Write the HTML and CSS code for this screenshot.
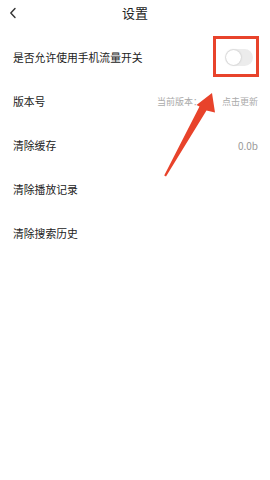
FILE: index.html
```html
<!DOCTYPE html>
<html lang="zh-CN">
<head>
<meta charset="utf-8">
<link rel="stylesheet" href="styles.css">
</head>
<body>
<div class="page">
  <header class="header">
    <svg class="back" width="8" height="12" viewBox="0 0 8 12"><path d="M6 1.5 L1.8 6 L6 10.5" fill="none" stroke="#333" stroke-width="1.4" stroke-linecap="round" stroke-linejoin="round"/></svg>
    <div class="title">设置</div>
  </header>
  <div class="row">
    <span class="label">是否允许使用手机流量开关</span>
    <span class="toggle"><span class="knob"></span></span>
  </div>
  <div class="row">
    <span class="label">版本号</span>
    <span class="version"><span class="cur">当前版本：</span><span class="upd">点击更新</span></span>
  </div>
  <div class="row">
    <span class="label">清除缓存</span>
    <span class="value">0.0b</span>
  </div>
  <div class="row">
    <span class="label">清除播放记录</span>
  </div>
  <div class="row">
    <span class="label">清除搜索历史</span>
  </div>
  <div class="mark-box"></div>
  <svg class="arrow" width="270" height="480" viewBox="0 0 270 480">
    <polygon points="212,93 215,112.5 206.5,110.5 166,176.6 164.2,175.6 199.5,106.5 196.5,105" fill="#e8432b"/>
  </svg>
</div>
</body>
</html>
```
FILE: styles.css
```css
html, body {
  margin: 0;
  padding: 0;
  background: #fff;
}
body {
  font-family: "Noto Sans CJK SC", "Noto Sans", sans-serif;
  color: #333;
}
.page {
  position: relative;
  width: 270px;
  height: 480px;
  overflow: hidden;
}
.header {
  height: 35px;
  display: flex;
  align-items: flex-start;
  justify-content: center;
  position: relative;
}
.back {
  position: absolute;
  left: 9px;
  top: 7px;
}
.title {
  height: 26px;
  line-height: 26px;
  font-size: 13px;
  color: #222;
}
.row {
  height: 44px;
  display: flex;
  align-items: center;
  justify-content: space-between;
  padding: 0 12px 0 13px;
}
.label {
  font-size: 10.8px;
  color: #222;
}
.toggle {
  width: 28px;
  height: 17px;
  border-radius: 9px;
  background: #ececec;
  margin-right: 5px;
  display: flex;
  align-items: center;
}
.knob {
  width: 15px;
  height: 15px;
  border-radius: 50%;
  background: #fff;
  margin-left: 1px;
  box-shadow: 0 0 2px rgba(0,0,0,0.25);
}
.version {
  display: flex;
  gap: 20px;
  font-size: 9px;
  color: #aaa;
}
.value {
  font-size: 10px;
  color: #999;
}
.mark-box {
  position: absolute;
  left: 213px;
  top: 36px;
  width: 40px;
  height: 35px;
  border: 3.5px solid #e8432b;
}
.arrow {
  position: absolute;
  left: 0;
  top: 0;
}
```
